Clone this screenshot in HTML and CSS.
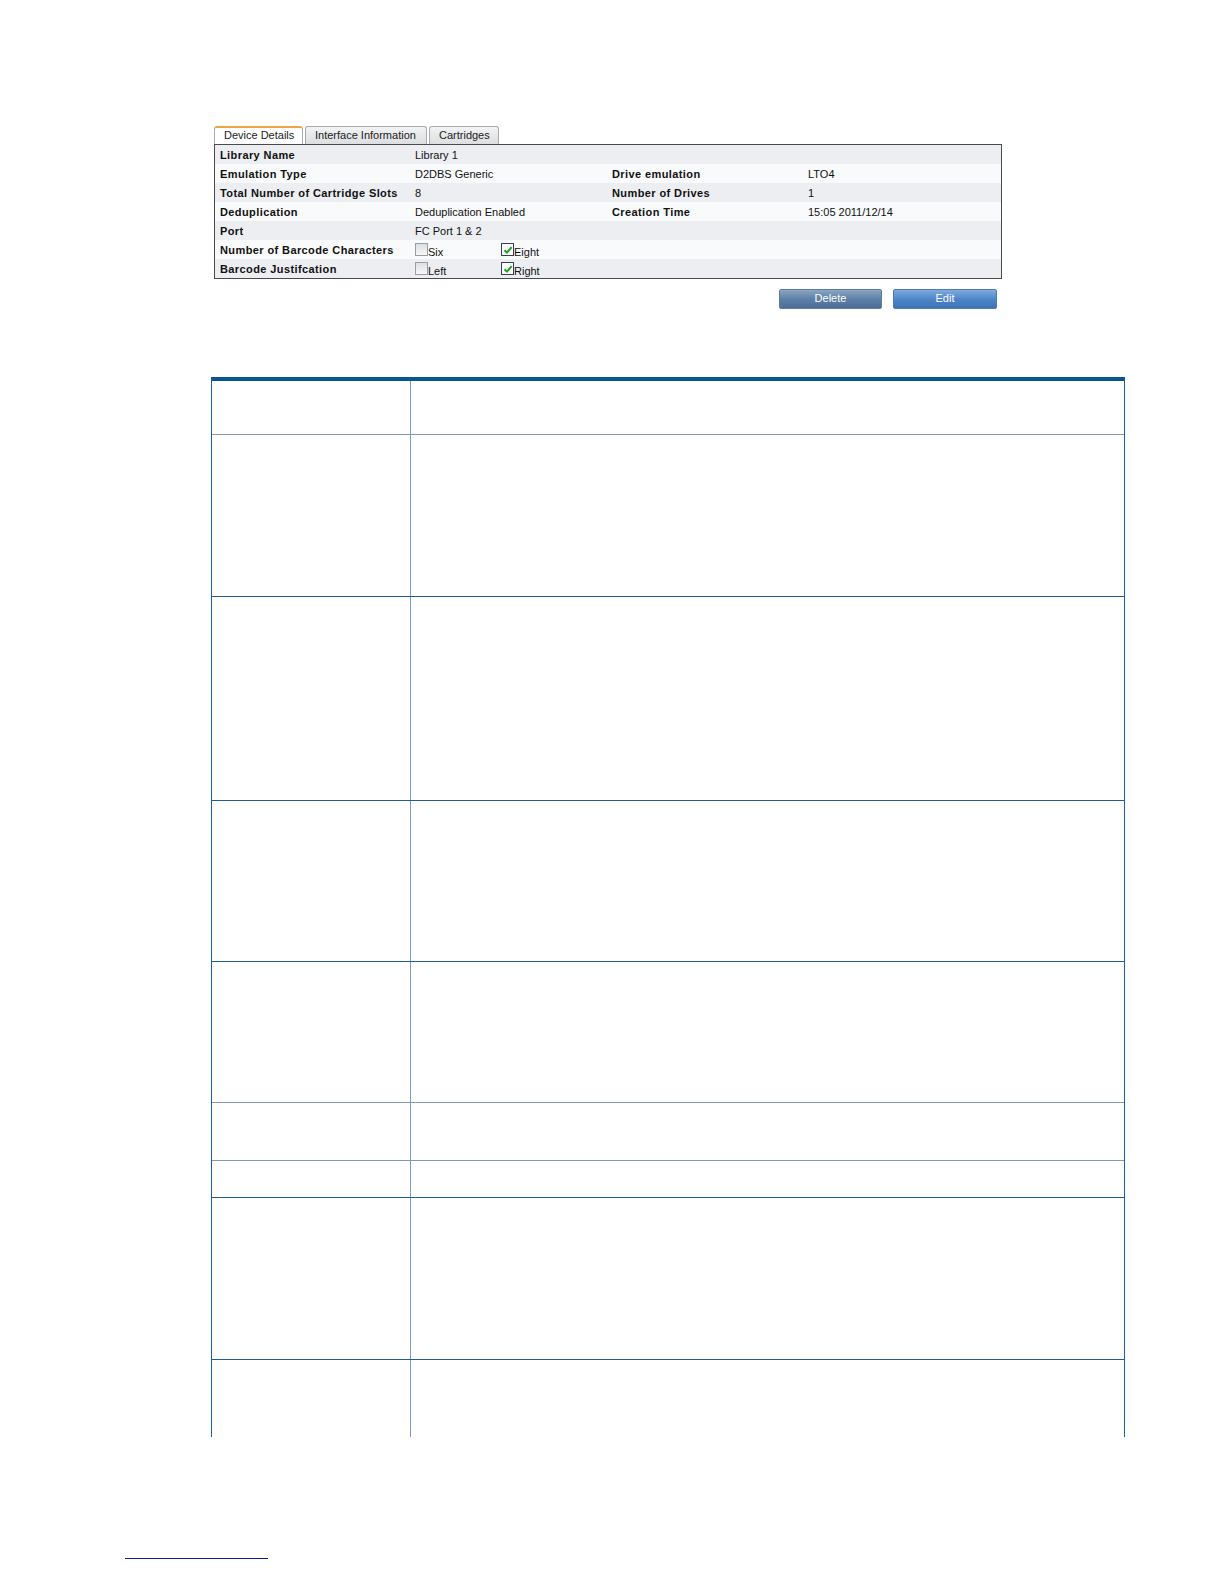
FILE: index.html
```html
<!DOCTYPE html>
<html>
<head>
<meta charset="utf-8">
<link rel="stylesheet" href="styles.css">
</head>
<body>
<div class="page">
  <div class="shot">
    <div class="tabs">
      <div class="tab active">Device Details</div>
      <div class="tab t2">Interface Information</div>
      <div class="tab t3">Cartridges</div>
    </div>
    <div class="panel">
      <div class="row odd"><span class="lab">Library Name</span><span class="val">Library 1</span><span class="lab"></span><span class="val"></span></div>
      <div class="row"><span class="lab">Emulation Type</span><span class="val">D2DBS Generic</span><span class="lab">Drive emulation</span><span class="val">LTO4</span></div>
      <div class="row odd"><span class="lab">Total Number of Cartridge Slots</span><span class="val">8</span><span class="lab">Number of Drives</span><span class="val">1</span></div>
      <div class="row"><span class="lab">Deduplication</span><span class="val">Deduplication Enabled</span><span class="lab">Creation Time</span><span class="val">15:05 2011/12/14</span></div>
      <div class="row odd"><span class="lab">Port</span><span class="val">FC Port 1 &amp; 2</span><span class="lab"></span><span class="val"></span></div>
      <div class="row"><span class="lab">Number of Barcode Characters</span>
        <span class="val checks">
          <span class="opt"><span class="cb"></span><span class="optt">Six</span></span>
          <span class="opt"><span class="cb on"><svg viewBox="0 0 10 10" width="10" height="10"><path d="M1.5 5.2 L4 7.6 L8.6 2.2" fill="none" stroke="#1aa01a" stroke-width="2"/></svg></span><span class="optt">Eight</span></span>
        </span><span class="lab"></span><span class="val"></span></div>
      <div class="row odd"><span class="lab">Barcode Justifcation</span>
        <span class="val checks">
          <span class="opt"><span class="cb"></span><span class="optt">Left</span></span>
          <span class="opt"><span class="cb on"><svg viewBox="0 0 10 10" width="10" height="10"><path d="M1.5 5.2 L4 7.6 L8.6 2.2" fill="none" stroke="#1aa01a" stroke-width="2"/></svg></span><span class="optt">Right</span></span>
        </span><span class="lab"></span><span class="val"></span></div>
    </div>
    <div class="buttons">
      <button class="btn del">Delete</button>
      <button class="btn edit">Edit</button>
    </div>
  </div>

  <div class="spec">
    <div class="srow r1 lt"><div class="c1"></div><div class="c2"></div></div>
    <div class="srow r2"><div class="c1"></div><div class="c2"></div></div>
    <div class="srow r3"><div class="c1"></div><div class="c2"></div></div>
    <div class="srow r4"><div class="c1"></div><div class="c2"></div></div>
    <div class="srow r5 lt"><div class="c1"></div><div class="c2"></div></div>
    <div class="srow r6 lt"><div class="c1"></div><div class="c2"></div></div>
    <div class="srow r7"><div class="c1"></div><div class="c2"></div></div>
    <div class="srow r8"><div class="c1"></div><div class="c2"></div></div>
    <div class="srow r9 last"><div class="c1"></div><div class="c2"></div></div>
  </div>

  <div class="footrule"></div>
</div>
</body>
</html>
```

FILE: styles.css
```css
* { box-sizing: border-box; }
html, body { margin: 0; padding: 0; background: #fff; overflow: hidden; }
body { font-family: "Liberation Sans", Arial, sans-serif; color: #000; }
.page { padding-top: 126px; padding-bottom: 10px; }

.shot { margin-left: 214px; width: 788px; }

.tabs { display: flex; gap: 2px; height: 18px; align-items: flex-end; }
.tab {
  height: 18px;
  font-size: 11px;
  line-height: 16px;
  padding: 0 9px;
  color: #222;
  border: 1px solid #a8abaf;
  border-bottom: none;
  border-radius: 3px 3px 0 0;
  background: linear-gradient(#f2f3f4, #dcdee0);
}
.tab.active {
  width: 89px;
  padding: 0 0 0 9px;
  background: #fff;
  border-top: 2px solid #f0a640;
  line-height: 15px;
}
.tab.t2 { width: 122px; padding-left: 9px; }
.tab.t3 { width: 70px; padding-left: 9px; }

.panel {
  border: 1px solid #4a4a4a;
  background: #f8f9fa;
}
.row {
  display: grid;
  grid-template-columns: 195px 197px 196px 1fr;
  height: 19px;
  align-items: center;
  padding-left: 5px;
  font-size: 11px;
  background: #f9fafb;
}
.row.odd { background: #eceef1; }
.lab { font-weight: bold; color: #111; white-space: nowrap; letter-spacing: 0.4px; }
.val { color: #111; white-space: nowrap; }

.checks { display: flex; align-items: flex-end; height: 19px; padding-bottom: 1px; }
.opt { display: flex; align-items: flex-end; width: 86px; }
.cb {
  width: 13px; height: 13px;
  border: 1px solid #9a9ea4;
  background: linear-gradient(#dcdfe2, #f6f7f8);
  display: flex; align-items: center; justify-content: center;
  margin-bottom: 2px;
}
.cb.on { border-color: #3a3f55; background: #fff; }
.optt { line-height: 12px; margin-left: 0; }

.buttons { display: flex; justify-content: flex-end; gap: 11px; padding-right: 5px; margin-top: 10px; }
.btn {
  height: 20px;
  border: 1px solid #5f7c9c;
  border-radius: 2px;
  font-family: "Liberation Sans", Arial, sans-serif;
  font-size: 11px;
  color: #fff;
  padding: 0 0 3px 0;
  line-height: 14px;
}
.btn.del { width: 103px; background: linear-gradient(#8aa6c4, #5e80a6 50%, #4d6f96); }
.btn.edit { width: 104px; background: linear-gradient(#7fabe0, #4f86c9 50%, #3d72b6); border-color: #4f7bb0; }

.spec {
  margin-top: 68px;
  margin-left: 211px;
  width: 914px;
  border-top: 4px solid #0b5592;
  border-left: 1px solid #1a62a8;
  border-right: 1px solid #1a62a8;
}
.srow { display: flex; border-bottom: 1px solid #1c5d9e; }
.srow.lt { border-bottom-color: #7c9ac0; }
.srow.last { border-bottom: none; }
.c1 { width: 199px; border-right: 1px solid #7f9dc2; }
.c2 { flex: 1; }
.r1 { height: 54px; }
.r2 { height: 162px; }
.r3 { height: 204px; }
.r4 { height: 161px; }
.r5 { height: 141px; }
.r6 { height: 58px; }
.r7 { height: 37px; }
.r8 { height: 162px; }
.r9 { height: 77px; }

.footrule { margin-top: 121px; margin-left: 125px; width: 143px; height: 1px; background: #101a8a; }
```
